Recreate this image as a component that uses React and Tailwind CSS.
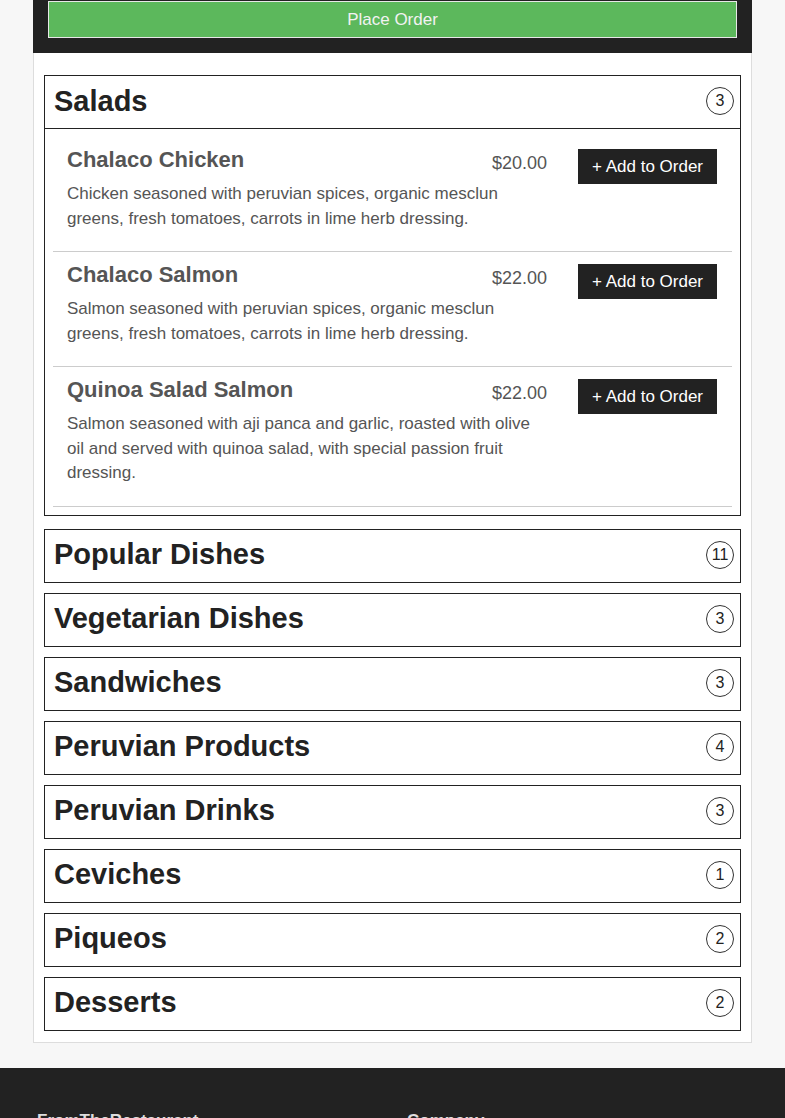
import React from "react";

const salads = [
  {
    name: "Chalaco Chicken",
    price: "$20.00",
    desc: "Chicken seasoned with peruvian spices, organic mesclun greens, fresh tomatoes, carrots in lime herb dressing.",
  },
  {
    name: "Chalaco Salmon",
    price: "$22.00",
    desc: "Salmon seasoned with peruvian spices, organic mesclun greens, fresh tomatoes, carrots in lime herb dressing.",
  },
  {
    name: "Quinoa Salad Salmon",
    price: "$22.00",
    desc: "Salmon seasoned with aji panca and garlic, roasted with olive oil and served with quinoa salad, with special passion fruit dressing.",
  },
];

const cats = [
  ["Popular Dishes", 11],
  ["Vegetarian Dishes", 3],
  ["Sandwiches", 3],
  ["Peruvian Products", 4],
  ["Peruvian Drinks", 3],
  ["Ceviches", 1],
  ["Piqueos", 2],
  ["Desserts", 2],
];

function Header({ title, count }) {
  return (
    <div className="h-[52px] pb-[2px] flex items-center justify-between pl-[9px] pr-[6px]">
      <h2 className="text-[29px] font-bold text-[#222] leading-none">{title}</h2>
      <span className="w-[28px] h-[28px] rounded-full border border-[#333] flex items-center justify-center text-[16px] text-[#222] leading-none">
        {count}
      </span>
    </div>
  );
}

function Item({ item }) {
  return (
    <div className="flex pt-[12px] pb-[20px] pl-[14px] pr-[15px] border-b border-[#ccc]">
      <div className="w-[480px]">
        <div className="flex justify-between items-center h-[24px]">
          <span className="text-[22px] font-bold text-[#555] leading-none -mt-[2px]">{item.name}</span>
          <span className="text-[18px] text-[#555] leading-none mt-[3px]">{item.price}</span>
        </div>
        <p className="mt-[9px] text-[17px] leading-[24.5px] text-[#555] pr-[3px]">{item.desc}</p>
      </div>
      <div className="ml-[31px]">
        <button className="h-[35px] w-[139px] bg-[#222] text-white text-[17px] flex items-center justify-center">
          + Add to Order
        </button>
      </div>
    </div>
  );
}

export default function App() {
  return (
    <div
      className="min-h-[1118px] bg-[#f7f7f7]"
      style={{ fontFamily: '"Liberation Sans", Arial, sans-serif' }}
    >
      <div className="w-[719px] mx-auto">
        <div className="bg-[#222] h-[53px] pt-px px-[15px]">
          <button className="w-full h-[37px] bg-[#5cb85c] border border-[#e8e8e8] text-[#f2f2f2] text-[17px]">
            Place Order
          </button>
        </div>
        <div className="bg-white border border-[#ddd] border-t-0 px-[10px] pt-[22px] pb-[11px]">
          <div className="border border-[#222]">
            <div className="border-b border-[#222]">
              <Header title="Salads" count={3} />
            </div>
            <div className="px-[8px] pt-[8px] pb-[8px]">
              {salads.map((it) => (
                <Item key={it.name} item={it} />
              ))}
            </div>
          </div>
          <div className="mt-[13px] flex flex-col gap-[10px]">
            {cats.map(([t, c]) => (
              <div key={t} className="border border-[#222]">
                <Header title={t} count={c} />
              </div>
            ))}
          </div>
        </div>
      </div>
      <footer className="mt-[25px] bg-[#222] h-[60px] pt-[40px]">
        <div className="flex pl-[37px]">
          <div className="w-[370px] text-[17px] font-bold text-[#ddd]">FromTheRestaurant</div>
          <div className="text-[17px] font-bold text-[#ddd]">Company</div>
        </div>
      </footer>
    </div>
  );
}
